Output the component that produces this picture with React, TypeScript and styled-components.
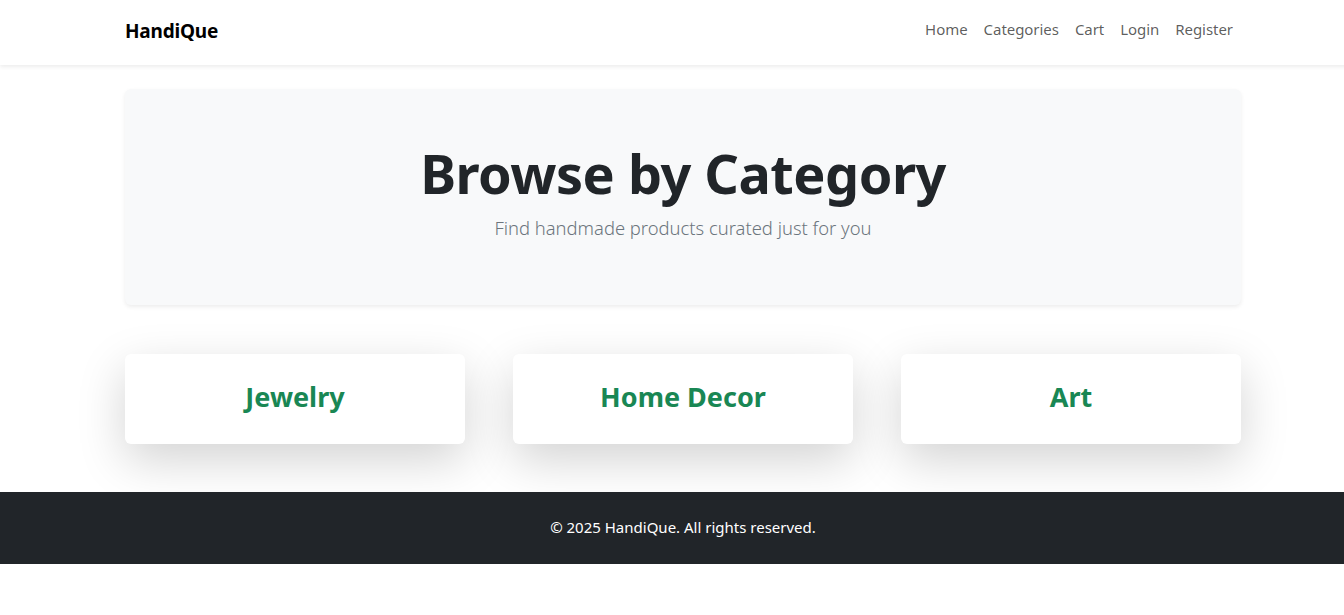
import React from "react";
import styled, { createGlobalStyle } from "styled-components";

const Global = createGlobalStyle`
  html, body { margin: 0; padding: 0; overflow-x: hidden; background: #fff; }
  body {
    font-family: "Noto Sans", "Open Sans", "Liberation Sans", sans-serif;
    font-size: 16px;
    line-height: 1.5;
    color: #212529;
  }
  * { box-sizing: border-box; }
`;

const Page = styled.div`
  width: 1366px;
  display: flex;
  flex-direction: column;
`;

const Container = styled.div`
  width: 1140px;
  margin: 0 auto;
  padding: 0 12px;
`;

const NavBar = styled.nav`
  background: #fff;
  box-shadow: 0 0.125rem 0.25rem rgba(0, 0, 0, 0.075);
  height: 65px;
  padding-bottom: 6px;
  display: flex;
  align-items: center;
`;

const NavInner = styled(Container)`
  display: flex;
  align-items: center;
  justify-content: space-between;
`;

const Brand = styled.a`
  font-size: 19px;
  font-weight: 700;
  color: #000;
  text-decoration: none;
  letter-spacing: -0.2px;
  padding-top: 3px;
`;

const NavList = styled.ul`
  display: flex;
  list-style: none;
  margin: 0;
  padding: 0;
`;

const NavLink = styled.a`
  display: block;
  padding: 8px 8px;
  font-size: 15px;
  letter-spacing: -0.05px;
  color: rgba(0, 0, 0, 0.65);
  text-decoration: none;
`;

const Main = styled(Container)`
  padding-top: 24px;
  padding-bottom: 48px;
`;

const Hero = styled.section`
  background: #f8f9fa;
  border-radius: 6px;
  box-shadow: 0 0.125rem 0.25rem rgba(0, 0, 0, 0.075);
  padding: 52px 48px 48px;
  text-align: center;
  height: 216px;
`;

const HeroTitle = styled.h1`
  margin: 0 0 8px;
  font-size: 54px;
  font-weight: 700;
  line-height: 1.2;
  color: #212529;
  letter-spacing: -0.5px;
`;

const Lead = styled.p`
  margin: 0;
  font-size: 18.4px;
  font-weight: 300;
  color: #6c757d;
`;

const CardRow = styled.div`
  display: grid;
  grid-template-columns: repeat(3, 1fr);
  gap: 48px;
  margin-top: 49px;
`;

const Card = styled.div`
  background: #fff;
  border-radius: 6px;
  box-shadow: 0 1rem 3rem rgba(0, 0, 0, 0.175);
  height: 90px;
  display: flex;
  align-items: center;
  justify-content: center;
  padding-bottom: 4px;
`;

const CardTitle = styled.h3`
  margin: 0;
  font-size: 27px;
  font-weight: 700;
  color: #198754;
  line-height: 1.2;
`;

const Footer = styled.footer`
  background: #212529;
  color: #fff;
  text-align: center;
  padding: 24px 0;
  height: 72px;
  font-size: 15px;
`;

const categories = ["Jewelry", "Home Decor", "Art"];
const links = ["Home", "Categories", "Cart", "Login", "Register"];

export default function App() {
  return (
    <>
      <Global />
      <Page>
        <NavBar>
          <NavInner>
            <Brand href="#">HandiQue</Brand>
            <NavList>
              {links.map((l) => (
                <li key={l}>
                  <NavLink href="#">{l}</NavLink>
                </li>
              ))}
            </NavList>
          </NavInner>
        </NavBar>
        <Main>
          <Hero>
            <HeroTitle>Browse by Category</HeroTitle>
            <Lead>Find handmade products curated just for you</Lead>
          </Hero>
          <CardRow>
            {categories.map((c) => (
              <Card key={c}>
                <CardTitle>{c}</CardTitle>
              </Card>
            ))}
          </CardRow>
        </Main>
        <Footer>© 2025 HandiQue. All rights reserved.</Footer>
      </Page>
    </>
  );
}
